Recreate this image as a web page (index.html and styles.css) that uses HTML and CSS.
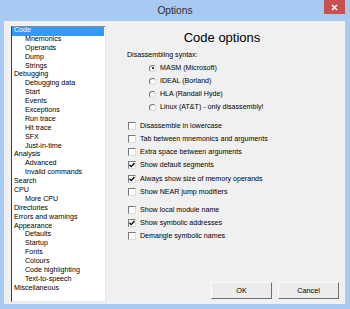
FILE: index.html
```html
<!DOCTYPE html>
<html lang="en">
<head>
  <meta charset="UTF-8">
  <title>Options</title>
  <link rel="stylesheet" href="styles.css">
</head>
<body>
  <div class="window">
    <div class="titlebar">
      <span class="title">Options</span>
      <span class="close">
        <svg width="7" height="7" viewBox="0 0 7 7"><path d="M1 1L6 6M6 1L1 6" stroke="#fff" stroke-width="1.5"/></svg>
      </span>
    </div>

    <div class="client">
      <!-- options tree -->
      <ul class="tree">
        <li class="selected">Code</li>
        <li class="child">Mnemonics</li>
        <li class="child">Operands</li>
        <li class="child">Dump</li>
        <li class="child">Strings</li>
        <li>Debugging</li>
        <li class="child">Debugging data</li>
        <li class="child">Start</li>
        <li class="child">Events</li>
        <li class="child">Exceptions</li>
        <li class="child">Run trace</li>
        <li class="child">Hit trace</li>
        <li class="child">SFX</li>
        <li class="child">Just-in-time</li>
        <li>Analysis</li>
        <li class="child">Advanced</li>
        <li class="child">Invalid commands</li>
        <li>Search</li>
        <li>CPU</li>
        <li class="child">More CPU</li>
        <li>Directories</li>
        <li>Errors and warnings</li>
        <li>Appearance</li>
        <li class="child">Defaults</li>
        <li class="child">Startup</li>
        <li class="child">Fonts</li>
        <li class="child">Colours</li>
        <li class="child">Code highlighting</li>
        <li class="child">Text-to-speech</li>
        <li>Miscellaneous</li>
      </ul>

      <div class="panel">
        <h1>Code options</h1>
        <div class="caption">Disassembling syntax:</div>

        <div class="radio-group">
          <div class="row"><span class="radio checked"></span>MASM (Microsoft)</div>
          <div class="row"><span class="radio"></span>IDEAL (Borland)</div>
          <div class="row"><span class="radio"></span>HLA (Randall Hyde)</div>
          <div class="row"><span class="radio"></span>Linux (AT&amp;T) - only disassembly!</div>
        </div>

        <div class="check-group">
          <div class="row"><span class="check"></span>Disassemble in lowercase</div>
          <div class="row"><span class="check"></span>Tab between mnemonics and arguments</div>
          <div class="row"><span class="check"></span>Extra space between arguments</div>
          <div class="row"><span class="check"><svg width="6" height="6" viewBox="0 0 6 6"><path d="M0.5 2.8L2.2 4.6L5.5 1" fill="none" stroke="#000" stroke-width="1.3"/></svg></span>Show default segments</div>
          <div class="row"><span class="check"><svg width="6" height="6" viewBox="0 0 6 6"><path d="M0.5 2.8L2.2 4.6L5.5 1" fill="none" stroke="#000" stroke-width="1.3"/></svg></span>Always show size of memory operands</div>
          <div class="row"><span class="check"></span>Show NEAR jump modifiers</div>
        </div>

        <div class="check-group second">
          <div class="row"><span class="check"></span>Show local module name</div>
          <div class="row"><span class="check"><svg width="6" height="6" viewBox="0 0 6 6"><path d="M0.5 2.8L2.2 4.6L5.5 1" fill="none" stroke="#000" stroke-width="1.3"/></svg></span>Show symbolic addresses</div>
          <div class="row"><span class="check"></span>Demangle symbolic names</div>
        </div>

        <div class="buttons">
          <button type="button">OK</button>
          <button type="button">Cancel</button>
        </div>
      </div>
    </div>
  </div>
</body>
</html>
```

FILE: styles.css
```css
body {
  margin: 0;
  font-family: "Liberation Sans", Arial, sans-serif;
  background: #a7c9f2;
}
.window {
  width: 350px;
  height: 309px;
  display: flex;
  flex-direction: column;
}
.titlebar {
  height: 21px;
  display: grid;
  grid-template-columns: 1fr auto 1fr;
}
.title {
  grid-column: 2;
  line-height: 21px;
  font-size: 10.2px;
  color: #2e2e2e;
}
.close {
  grid-column: 3;
  justify-self: end;
  width: 21px;
  height: 14px;
  margin-right: 5px;
  background: #c75050;
  display: flex;
  align-items: center;
  justify-content: center;
}
.close svg {
  display: block;
}
.client {
  height: 283px;
  margin: 0 5px 5px 4px;
  background: #f0f0f0;
  display: flex;
}
.tree {
  list-style: none;
  margin: 5px 0 0 7px;
  padding: 0;
  width: 93px;
  height: 274px;
  background: #fff;
  border-top: 1px solid #8c8c8c;
  border-left: 1px solid #3c3c3c;
  border-right: 1px solid #e6e6e6;
  border-bottom: 1px solid #e6e6e6;
  font-size: 7.1px;
}
.tree li {
  height: 8.9px;
  line-height: 7.2px;
  padding-left: 2px;
  white-space: nowrap;
}
.tree li.child {
  padding-left: 13px;
}
.tree li.selected {
  background: #3399ff;
  color: #fff;
  margin-right: 1px;
}
.panel {
  flex: 1;
  display: flex;
  flex-direction: column;
  padding: 9px 6px 5px 21px;
  font-size: 7.1px;
  color: #000;
}
.panel h1 {
  margin: 0;
  padding-right: 22px;
  font-size: 13px;
  font-weight: normal;
  line-height: 16px;
  text-align: center;
}
.caption {
  margin-top: 2.5px;
  line-height: 13px;
}
.row {
  height: 13px;
  display: flex;
  align-items: center;
  white-space: nowrap;
}
.radio-group .row {
  padding-left: 22px;
}
.radio {
  width: 5px;
  height: 5px;
  margin-right: 4px;
  border-radius: 50%;
  border: 1px solid;
  border-color: #6e6e6e #d8d8d8 #d8d8d8 #6e6e6e;
  background: #fff;
  display: flex;
  align-items: center;
  justify-content: center;
}
.radio.checked::after {
  content: "";
  width: 2px;
  height: 2px;
  border-radius: 50%;
  background: #000;
}
.check-group {
  margin-top: 5.7px;
}
.check-group .row {
  height: 13.2px;
  padding-left: 1px;
}
.check-group.second {
  margin-top: 5.1px;
}
.check-group.second .row {
  height: 12.9px;
}
.check {
  width: 6px;
  height: 6px;
  margin-right: 4px;
  border: 1px solid;
  border-color: #7a7a7a #dcdcdc #dcdcdc #7a7a7a;
  background: #fff;
}
.check svg {
  display: block;
}
.buttons {
  margin-top: auto;
  display: flex;
  justify-content: flex-end;
  gap: 6px;
}
.buttons button {
  width: 61px;
  height: 17px;
  padding: 0;
  font-family: "Liberation Sans", Arial, sans-serif;
  font-size: 7.3px;
  color: #000;
  background: #ececec;
  border: 1px solid;
  border-color: #fdfdfd #6f6f6f #6f6f6f #fdfdfd;
  border-radius: 0;
}
```
